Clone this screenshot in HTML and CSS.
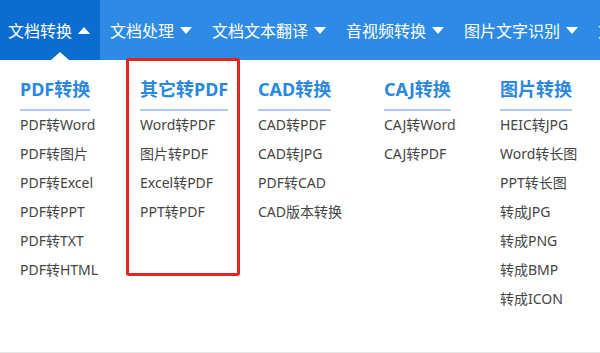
FILE: index.html
```html
<!DOCTYPE html>
<html lang="zh">
<head>
  <meta charset="UTF-8">
  <meta name="viewport" content="width=device-width, initial-scale=1.0">
  <title>文档转换</title>
  <link rel="stylesheet" href="styles.css">
</head>
<body>
  <div id="nav">
    <div class="item active">文档转换<span class="arrow up"></span><span class="caret"></span></div>
    <div class="item">文档处理<span class="arrow"></span></div>
    <div class="item">文档文本翻译<span class="arrow"></span></div>
    <div class="item">音视频转换<span class="arrow"></span></div>
    <div class="item">图片文字识别<span class="arrow"></span></div>
    <div class="item">文档压缩<span class="arrow"></span></div>
  </div>
  <div id="menu">
    <div class="col">
      <div class="title">PDF转换</div>
      <ul>
        <li>PDF转Word</li>
        <li>PDF转图片</li>
        <li>PDF转Excel</li>
        <li>PDF转PPT</li>
        <li>PDF转TXT</li>
        <li>PDF转HTML</li>
      </ul>
    </div>
    <div class="col">
      <div class="title">其它转PDF</div>
      <ul>
        <li>Word转PDF</li>
        <li>图片转PDF</li>
        <li>Excel转PDF</li>
        <li>PPT转PDF</li>
      </ul>
    </div>
    <div class="col">
      <div class="title">CAD转换</div>
      <ul>
        <li>CAD转PDF</li>
        <li>CAD转JPG</li>
        <li>PDF转CAD</li>
        <li>CAD版本转换</li>
      </ul>
    </div>
    <div class="col">
      <div class="title">CAJ转换</div>
      <ul>
        <li>CAJ转Word</li>
        <li>CAJ转PDF</li>
      </ul>
    </div>
    <div class="col">
      <div class="title">图片转换</div>
      <ul>
        <li>HEIC转JPG</li>
        <li>Word转长图</li>
        <li>PPT转长图</li>
        <li>转成JPG</li>
        <li>转成PNG</li>
        <li>转成BMP</li>
        <li>转成ICON</li>
      </ul>
    </div>
  </div>
  <div class="mark"></div>
</body>
</html>
```

FILE: styles.css
```css
html,
body {
  padding: 0;
  margin: 0;
  background: #fff;
  font-family: "Noto Sans", "Noto Sans CJK SC", sans-serif;
}
body {
  position: relative;
  height: 353px;
  overflow: hidden;
  box-sizing: border-box;
  border-bottom: 1px solid #e6e6e6;
}
#nav {
  display: flex;
  height: 60px;
  background: #2d8be6;
  color: #fff;
  font-size: 16px;
  white-space: nowrap;
  overflow: hidden;
}
#nav > .item {
  position: relative;
  display: flex;
  align-items: center;
  flex-shrink: 0;
  padding: 0 10px;
}
#nav > .item.active {
  padding: 0 10px 0 8px;
  background: #0b6dd0;
}
#nav .arrow {
  width: 0;
  height: 0;
  margin-left: 6px;
  border-left: 6px solid transparent;
  border-right: 6px solid transparent;
  border-top: 7px solid #fff;
}
#nav .arrow.up {
  border-top: none;
  border-bottom: 7px solid #fff;
}
#nav .caret {
  position: absolute;
  left: 51px;
  bottom: 0;
  width: 0;
  height: 0;
  border-left: 9px solid transparent;
  border-right: 9px solid transparent;
  border-bottom: 8px solid #fff;
}
#menu {
  display: grid;
  grid-template-columns: 120px 118px 126px 116px auto;
  padding: 16px 0 0 20px;
}
#menu .title {
  display: inline-block;
  padding-bottom: 7px;
  border-bottom: 2px solid #a9cdf3;
  color: #2b88e0;
  font-size: 18px;
  font-weight: bold;
  line-height: 26px;
}
#menu ul {
  list-style: none;
  margin: -1px 0 0;
  padding: 0;
}
#menu li {
  color: #444;
  font-size: 14px;
  line-height: 29px;
}
.mark {
  position: absolute;
  left: 126px;
  top: 58px;
  width: 114px;
  height: 218px;
  box-sizing: border-box;
  border: 3px solid #e2261f;
  border-radius: 3px;
}
```
